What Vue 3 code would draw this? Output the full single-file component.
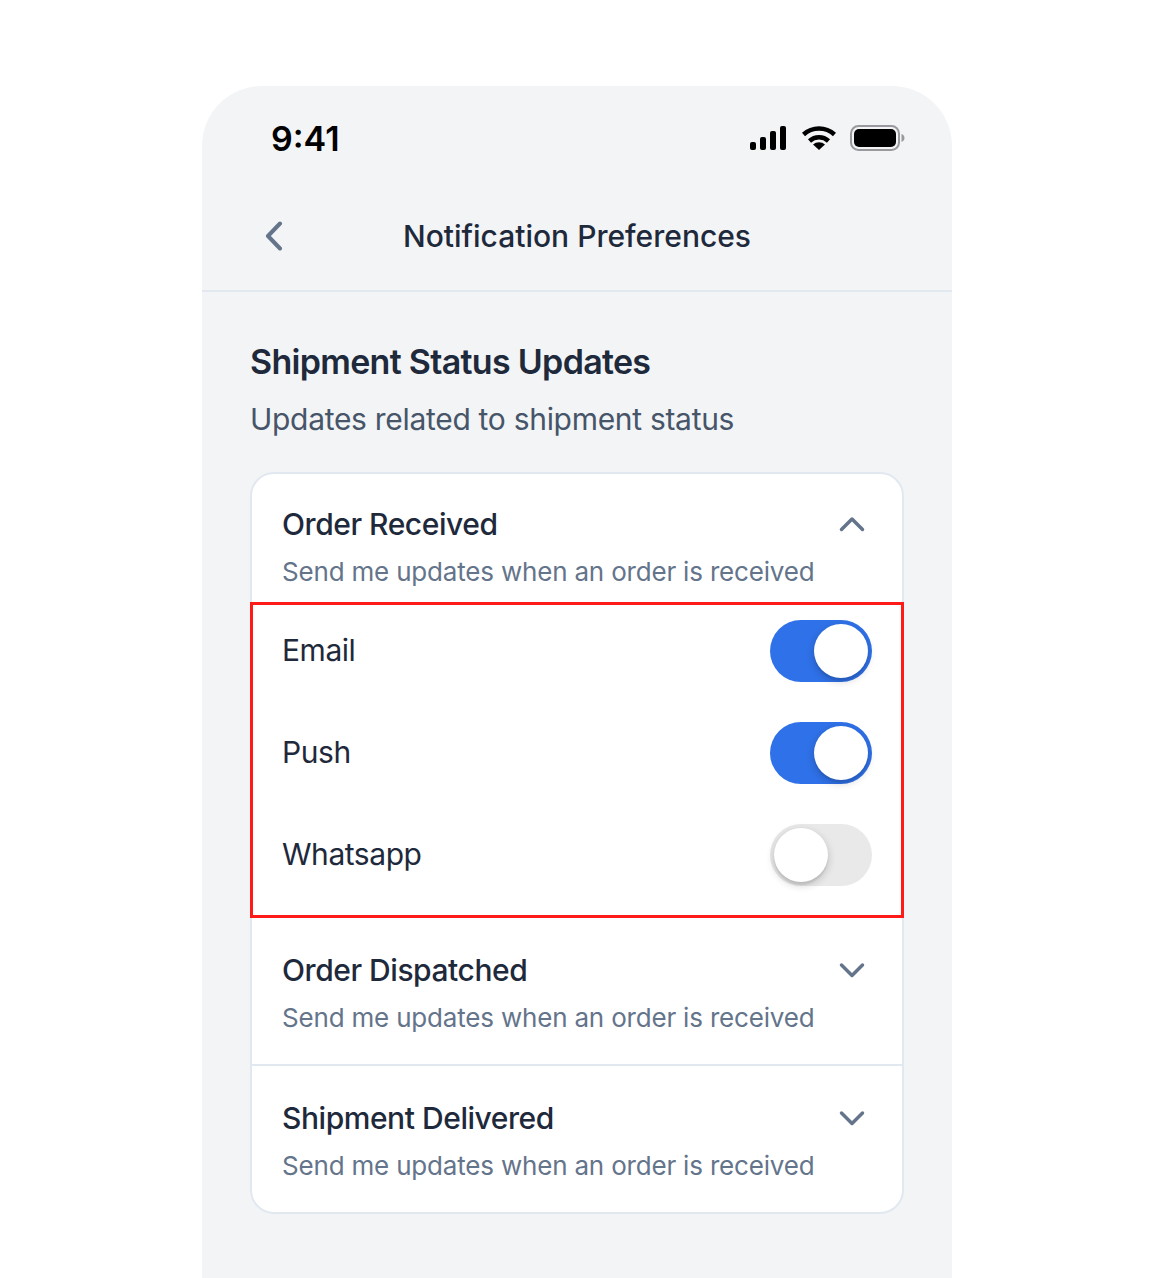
<script setup>
import { ref } from "vue";

const channels = ref([
  { name: "Email", on: true },
  { name: "Push", on: true },
  { name: "Whatsapp", on: false }
]);

const desc = "Send me updates when an order is received";
</script>

<template>
  <div class="page">
    <div class="phone">
      <div class="status">
        <span class="time">9:41</span>
        <div class="status-icons">
          <svg width="36" height="24" viewBox="0 0 36 24" fill="#000">
            <rect x="0" y="16" width="6" height="8" rx="2" />
            <rect x="10" y="11" width="6" height="13" rx="2" />
            <rect x="20" y="5" width="6" height="19" rx="2" />
            <rect x="30" y="0" width="6" height="24" rx="2" />
          </svg>
          <svg width="34" height="24" viewBox="0 0 34 24" fill="none">
            <path d="M1.500 8.500A23 23 0 0 1 32.500 8.500" stroke="#000" stroke-width="4.500" />
            <path d="M7.500 15A14 14 0 0 1 26.500 15" stroke="#000" stroke-width="4.500" />
            <path d="M11 18.500A9 9 0 0 1 23 18.500L17 24Z" fill="#000" />
          </svg>
          <svg class="battery" width="55" height="26" viewBox="0 0 55 26">
            <rect x="1" y="1" width="48" height="24" rx="7.500" fill="none" stroke="#9a9a9e" stroke-width="2" />
            <rect x="4" y="4" width="42" height="18" rx="5" fill="#000" />
            <path d="M51.500 9c1.800.6 3 2.200 3 4s-1.200 3.400-3 4z" fill="#9a9a9e" />
          </svg>
        </div>
      </div>

      <div class="nav">
        <svg class="back" width="18" height="30" viewBox="0 0 18 30" fill="none">
          <path d="M15 2.500 3 15l12 12.500" stroke="#64748b" stroke-width="4" stroke-linecap="round" stroke-linejoin="round" />
        </svg>
        <span class="nav-title">Notification Preferences</span>
      </div>

      <div class="content">
        <h1>Shipment Status Updates</h1>
        <p class="sub">Updates related to shipment status</p>

        <div class="card">
          <div class="item item-open">
            <div class="item-head">
              <span class="item-title">Order Received</span>
              <svg width="26" height="16" viewBox="0 0 26 16" fill="none">
                <path d="M2.500 13.500 13 3l10.500 10.500" stroke="#64748b" stroke-width="3.500" stroke-linecap="round" stroke-linejoin="round" />
              </svg>
            </div>
            <div class="item-desc">{{ desc }}</div>
          </div>

          <div class="channels">
            <div v-for="c in channels" :key="c.name" class="channel">
              <span class="channel-name">{{ c.name }}</span>
              <div class="toggle" :class="{ on: c.on }">
                <div class="knob"></div>
              </div>
            </div>
          </div>

          <div class="item">
            <div class="item-head">
              <span class="item-title">Order Dispatched</span>
              <svg width="26" height="16" viewBox="0 0 26 16" fill="none">
                <path d="M2.500 3 13 13.500 23.500 3" stroke="#64748b" stroke-width="3.500" stroke-linecap="round" stroke-linejoin="round" />
              </svg>
            </div>
            <div class="item-desc">{{ desc }}</div>
          </div>

          <div class="item item-last">
            <div class="item-head">
              <span class="item-title">Shipment Delivered</span>
              <svg width="26" height="16" viewBox="0 0 26 16" fill="none">
                <path d="M2.500 3 13 13.500 23.500 3" stroke="#64748b" stroke-width="3.500" stroke-linecap="round" stroke-linejoin="round" />
              </svg>
            </div>
            <div class="item-desc">{{ desc }}</div>
          </div>
        </div>
      </div>
    </div>
  </div>
</template>

<style>
html,
body {
  margin: 0;
  background: #fff;
}
</style>

<style scoped>
.page {
  height: 1278px;
  padding-top: 86px;
  box-sizing: border-box;
  overflow: hidden;
  font-family: Inter, "Liberation Sans", sans-serif;
}

.phone {
  width: 750px;
  height: 1192px;
  margin-left: 202px;
  background: #f3f4f6;
  border-radius: 60px 60px 0 0;
}

.status {
  display: flex;
  justify-content: space-between;
  align-items: center;
  height: 104px;
  padding: 0 46px 0 69px;
}

.time {
  font-size: 34px;
  font-weight: 600;
  color: #000;
}

.status-icons {
  display: flex;
  align-items: center;
  gap: 16px;
}

.battery {
  margin: 0 1px 0 -2px;
}

.nav {
  position: relative;
  display: flex;
  justify-content: center;
  align-items: center;
  height: 92px;
  padding-bottom: 8px;
  border-bottom: 2px solid #e2e8f0;
}

.back {
  position: absolute;
  left: 63px;
  top: 31px;
}

.nav-title {
  font-size: 30px;
  font-weight: 500;
  color: #1e293b;
}

.content {
  padding: 48px 48px 0;
}

h1 {
  margin: 0;
  font-size: 34px;
  line-height: 44px;
  font-weight: 600;
  letter-spacing: -0.7px;
  color: #1e293b;
}

.sub {
  margin: 15px 0 33px;
  font-size: 30px;
  line-height: 40px;
  letter-spacing: -0.3px;
  color: #475569;
}

.card {
  background: #fff;
  border: 2px solid #e2e8f0;
  border-radius: 24px;
}

.item {
  padding: 32px 30px 27px;
  border-bottom: 2px solid #e2e8f0;
}

.item-open {
  padding-top: 30px;
  padding-bottom: 11px;
  border-bottom: none;
}

.item-last {
  border-bottom: none;
}

.item-head {
  display: flex;
  justify-content: space-between;
  align-items: center;
  padding-right: 7px;
  height: 40px;
}

.item-title {
  padding-bottom: 1px;
  font-size: 30px;
  font-weight: 500;
  letter-spacing: -0.45px;
  color: #1e293b;
}

.item-desc {
  margin-top: 9px;
  font-size: 26px;
  line-height: 38px;
  letter-spacing: -0.19px;
  color: #64748b;
}

.channels {
  display: flex;
  flex-direction: column;
  gap: 40px;
  margin: 0 -2px;
  padding: 15px 29px 29px 29px;
  border: 3px solid #ff1a1a;
}

.channel {
  display: flex;
  justify-content: space-between;
  align-items: center;
  font-size: 30px;
  letter-spacing: -0.45px;
  color: #1e293b;
}

.channel-name {
  padding-bottom: 2px;
}

.toggle {
  display: flex;
  justify-content: flex-start;
  align-items: center;
  width: 102px;
  height: 62px;
  padding: 4px;
  box-sizing: border-box;
  border-radius: 31px;
  background: #e9e9ea;
}

.toggle.on {
  justify-content: flex-end;
  background: #2f71e8;
}

.knob {
  width: 54px;
  height: 54px;
  border-radius: 50%;
  background: #fff;
  box-shadow: 0 3px 8px rgba(0, 0, 0, 0.2), 0 3px 1px rgba(0, 0, 0, 0.06);
}
</style>
